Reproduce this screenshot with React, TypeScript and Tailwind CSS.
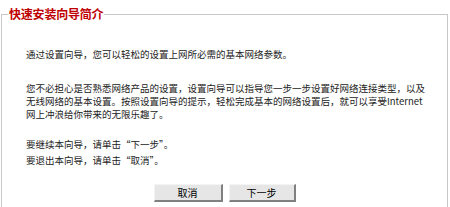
import React from "react";

const App: React.FC = () => {
  return (
    <div className="w-[450px] h-[207px] overflow-hidden bg-white font-['Noto_Sans_CJK_SC','Liberation_Sans',sans-serif]">
      <fieldset className="ml-[1px] w-[447px] h-[240px] border border-[#c8c8c8] px-[4px]">
        {/* Legend */}
        <legend className="ml-[2px] px-[1px] text-[12px] leading-[28px] font-bold text-[#c00000] tracking-[-0.2px]">
          快速安装向导简介
        </legend>

        <div className="pl-[20px] text-[9.5px] text-[#222] whitespace-nowrap">
          <p className="mt-[20px] leading-[13px]">
            通过设置向导，您可以轻松的设置上网所必需的基本网络参数。
          </p>
          <p className="mt-[21px] leading-[13px]">
            您不必担心是否熟悉网络产品的设置，设置向导可以指导您一步一步设置好网络连接类型，以及
            <br />
            无线网络的基本设置。按照设置向导的提示，轻松完成基本的网络设置后，就可以享受Internet
            <br />
            网上冲浪给你带来的无限乐趣了。
          </p>
          <p className="mt-[15px] leading-[16px]">要继续本向导，请单击“下一步”。</p>
          <p className="leading-[16px]">要退出本向导，请单击“取消”。</p>
        </div>

        {/* Buttons */}
        <div className="mt-[16px] flex justify-center gap-[6px]">
          <button className="w-[69px] h-[18px] bg-[#e6e6e6] border border-[#f4f4f4] border-r-[#808080] border-b-[#808080] border-r-2 border-b-2 text-[10px] text-black leading-none">
            取消
          </button>
          <button className="w-[67px] h-[18px] bg-[#e6e6e6] border border-[#f4f4f4] border-r-[#808080] border-b-[#808080] border-r-2 border-b-2 text-[10px] text-black leading-none">
            下一步
          </button>
        </div>
      </fieldset>
    </div>
  );
};

export default App;
